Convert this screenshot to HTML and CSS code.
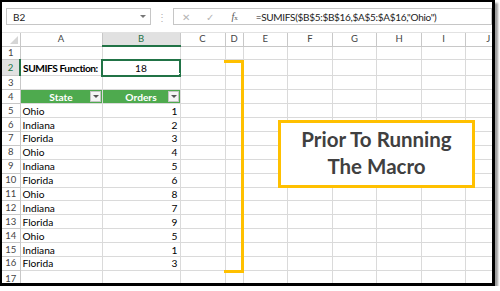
FILE: index.html
```html
<!DOCTYPE html>
<html lang="en">
<head>
    <meta charset="UTF-8">
    <title>SUMIFS - Prior To Running The Macro</title>
    <link rel="stylesheet" href="styles.css">
</head>
<body>
    <div class="window">
        <div class="formula-bar">
            <div class="name-box">
                <span>B2</span>
                <span class="name-arrow"></span>
            </div>
            <div class="grip">⋮</div>
            <div class="formula-box">
                <span class="fb-icon cancel">✕</span>
                <span class="fb-icon enter">✓</span>
                <span class="fb-icon fx"><i>f</i><small>x</small></span>
                <span class="formula-text">=SUMIFS($B$5:$B$16,$A$5:$A$16,"Ohio")</span>
            </div>
        </div>

        <table class="sheet">
            <colgroup>
                <col class="w-row">
                <col class="w-a">
                <col class="w-b">
                <col class="w-c">
                <col class="w-d">
                <col class="w-e">
                <col class="w-e">
                <col class="w-e">
                <col class="w-e">
                <col class="w-e">
                <col class="w-e">
            </colgroup>
            <tr class="heads">
                <th class="corner"><span class="corner-mark"></span></th>
                <th>A</th><th class="active">B</th><th>C</th><th>D</th><th>E</th>
                <th>F</th><th>G</th><th>H</th><th>I</th><th>J</th>
            </tr>
            <tr><th>1</th><td></td><td></td><td></td><td></td><td></td><td></td><td></td><td></td><td></td><td></td></tr>
            <tr class="tall">
                <th class="active">2</th>
                <td class="bold">SUMIFS Function:</td>
                <td class="center selected">18<span class="handle"></span></td>
                <td></td><td></td><td></td><td></td><td></td><td></td><td></td><td></td>
            </tr>
            <tr><th>3</th><td></td><td></td><td></td><td></td><td></td><td></td><td></td><td></td><td></td><td></td></tr>
            <tr>
                <th>4</th>
                <td class="tbl-head">State<span class="filter"></span></td>
                <td class="tbl-head">Orders<span class="filter"></span></td>
                <td></td><td></td><td></td><td></td><td></td><td></td><td></td><td></td>
            </tr>
            <tr><th>5</th><td>Ohio</td><td class="num">1</td><td></td><td></td><td></td><td></td><td></td><td></td><td></td><td></td></tr>
            <tr><th>6</th><td>Indiana</td><td class="num">2</td><td></td><td></td><td></td><td></td><td></td><td></td><td></td><td></td></tr>
            <tr><th>7</th><td>Florida</td><td class="num">3</td><td></td><td></td><td></td><td></td><td></td><td></td><td></td><td></td></tr>
            <tr><th>8</th><td>Ohio</td><td class="num">4</td><td></td><td></td><td></td><td></td><td></td><td></td><td></td><td></td></tr>
            <tr><th>9</th><td>Indiana</td><td class="num">5</td><td></td><td></td><td></td><td></td><td></td><td></td><td></td><td></td></tr>
            <tr><th>10</th><td>Florida</td><td class="num">6</td><td></td><td></td><td></td><td></td><td></td><td></td><td></td><td></td></tr>
            <tr><th>11</th><td>Ohio</td><td class="num">8</td><td></td><td></td><td></td><td></td><td></td><td></td><td></td><td></td></tr>
            <tr><th>12</th><td>Indiana</td><td class="num">7</td><td></td><td></td><td></td><td></td><td></td><td></td><td></td><td></td></tr>
            <tr><th>13</th><td>Florida</td><td class="num">9</td><td></td><td></td><td></td><td></td><td></td><td></td><td></td><td></td></tr>
            <tr><th>14</th><td>Ohio</td><td class="num">5</td><td></td><td></td><td></td><td></td><td></td><td></td><td></td><td></td></tr>
            <tr><th>15</th><td>Indiana</td><td class="num">1</td><td></td><td></td><td></td><td></td><td></td><td></td><td></td><td></td></tr>
            <tr><th>16</th><td>Florida</td><td class="num">3</td><td></td><td></td><td></td><td></td><td></td><td></td><td></td><td></td></tr>
            <tr class="last"><th>17</th><td></td><td></td><td></td><td></td><td></td><td></td><td></td><td></td><td></td><td></td></tr>
        </table>

        <!-- shapes drawn over the grid -->
        <div class="bracket"></div>
        <div class="callout">Prior To Running<br>The Macro</div>
    </div>
</body>
</html>
```

FILE: styles.css
```css
:root {
    --excel-green: #217346;
    --table-green: #4eaa4e;
    --grid: #dadada;
    --head-line: #c8c8c8;
    --head-text: #444444;
    --callout: #ffc000;
}

* {
    box-sizing: border-box;
    margin: 0;
    padding: 0;
}

body {
    background: #ffffff;
    font-family: Lato, "Open Sans", "Liberation Sans", sans-serif;
    color: #000000;
}

.window {
    position: relative;
    width: 495px;
    height: 286px;
    border: solid #000000;
    border-width: 2px 3px 3px 2px;
    box-shadow: 3px 3px 2px #9c9c9c;
    background: #ffffff;
    overflow: hidden;
}

/* formula bar */
.formula-bar {
    height: 31px;
    display: flex;
    align-items: center;
    padding: 0 0 1px 4px;
    border-bottom: 1px solid #e2e2e2;
}

.name-box {
    width: 145px;
    height: 17px;
    border: 1px solid #c6c6c6;
    display: flex;
    align-items: center;
    justify-content: space-between;
    padding: 0 4px 0 6px;
    font-size: 10px;
    color: #222222;
}

.name-arrow {
    width: 0;
    height: 0;
    border-left: 3px solid transparent;
    border-right: 3px solid transparent;
    border-top: 3px solid #777777;
}

.grip {
    width: 22px;
    text-align: center;
    color: #b0b0b0;
    font-size: 10px;
}

.formula-box {
    width: 320px;
    height: 17px;
    border: 1px solid #c6c6c6;
    display: flex;
    align-items: center;
    font-size: 10px;
    color: #222222;
}

.fb-icon {
    color: #b4b4b4;
    text-align: center;
    font-size: 10px;
}

.cancel {
    width: 22px;
    margin-left: 1px;
}

.enter {
    width: 26px;
}

.fx {
    width: 24px;
    color: #555555;
    font-family: "Liberation Serif", serif;
}

.fx small {
    font-size: 7px;
}

.formula-text {
    padding-left: 9px;
    white-space: nowrap;
    letter-spacing: -0.3px;
}

/* grid */
.sheet {
    table-layout: fixed;
    border-collapse: collapse;
    width: 509px;
    font-size: 10.2px;
}

.w-row { width: 18px; }
.w-a { width: 82px; }
.w-b { width: 78px; }
.w-c { width: 45px; }
.w-d { width: 18px; }
.w-e { width: 44.6px; }

.sheet tr {
    height: 13.9px;
}

.sheet tr.heads {
    height: 13px;
}

.sheet tr.tall {
    height: 16px;
}

.sheet th,
.sheet td {
    border: 1px solid var(--grid);
    padding: 0 2px;
    line-height: 12px;
    white-space: nowrap;
    overflow: hidden;
}

.sheet th {
    font-weight: normal;
    color: var(--head-text);
    font-size: 9.5px;
    text-align: center;
    border-color: var(--head-line);
    padding: 0;
}

.sheet .heads th {
    border-top: none;
}

.sheet .last th,
.sheet .last td {
    vertical-align: top;
    padding-top: 2px;
}

.sheet th.active {
    background: #e1e1e1;
    color: var(--excel-green);
}

.sheet .heads th.active {
    border-bottom: 2px solid var(--excel-green);
}

.sheet tr > th:first-child {
    border-left: none;
}

.sheet tr > th.active:first-child {
    border-right: 2px solid var(--excel-green);
}

.corner {
    position: relative;
}

.corner-mark {
    position: absolute;
    right: 2px;
    bottom: 2px;
    width: 0;
    height: 0;
    border-left: 8px solid transparent;
    border-bottom: 8px solid #d5d5d5;
}

.bold {
    font-weight: bold;
    letter-spacing: -0.45px;
}

.center {
    text-align: center;
}

.num {
    text-align: right;
}

.selected {
    position: relative;
    outline: 2px solid var(--excel-green);
    outline-offset: -1px;
}

.handle {
    position: absolute;
    right: -3px;
    bottom: -3px;
    width: 5px;
    height: 5px;
    background: var(--excel-green);
    border: 1px solid #ffffff;
}

.tbl-head {
    position: relative;
    background: var(--table-green);
    color: #ffffff;
    font-weight: bold;
    text-align: center;
}

.filter {
    position: absolute;
    right: 1px;
    top: 1px;
    width: 11px;
    height: 11px;
    background: #f4f4f4;
    border: 1px solid #c4c4c4;
}

.filter::after {
    content: "";
    position: absolute;
    left: 2px;
    top: 3px;
    border-left: 3px solid transparent;
    border-right: 3px solid transparent;
    border-top: 3px solid #555555;
}

/* shapes */
.bracket {
    position: absolute;
    left: 222px;
    top: 58px;
    width: 20px;
    height: 213px;
    border: 3px solid var(--callout);
    border-left: none;
}

.callout {
    position: absolute;
    left: 276px;
    top: 118px;
    width: 197px;
    height: 68px;
    border: 3px solid var(--callout);
    background: #ffffff;
    color: #404040;
    font-weight: bold;
    font-size: 20.5px;
    line-height: 27px;
    text-align: center;
    padding-top: 3px;
}
```
